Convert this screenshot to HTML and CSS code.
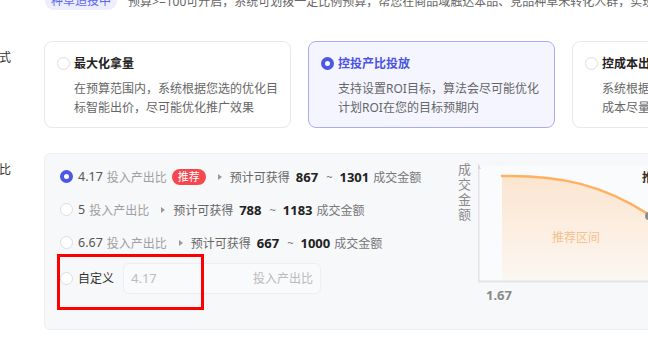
FILE: index.html
```html
<!DOCTYPE html>
<html lang="zh-CN">
<head>
  <meta charset="UTF-8" />
  <title>投放设置</title>
  <link rel="stylesheet" href="styles.css">
</head>
<body>
  <!-- Top notice -->
  <div class="notice">
    <span class="notice-tag">种草追投中</span>
    <span class="notice-text">预算&gt;=100可开启，系统可划拨一定比例预算，帮您在商品域触达本品、竞品种草未转化人群，实现种草转化</span>
  </div>

  <!-- Bid mode -->
  <div class="form-row">
    <div class="form-label"><span>出价方式</span></div>
    <div class="mode-cards">
      <div class="mode-card">
        <div class="mode-title"><span class="radio"></span>最大化拿量</div>
        <div class="mode-desc">在预算范围内，系统根据您选的优化目标智能出价，尽可能优化推广效果</div>
      </div>
      <div class="mode-card active">
        <div class="mode-title"><span class="radio checked"></span>控投产比投放</div>
        <div class="mode-desc">支持设置ROI目标，算法会尽可能优化计划ROI在您的目标预期内</div>
      </div>
      <div class="mode-card">
        <div class="mode-title"><span class="radio"></span>控成本出价</div>
        <div class="mode-desc">系统根据您设置的成本目标智能出价，成本尽量控制在目标范围内</div>
      </div>
    </div>
  </div>

  <!-- ROI target -->
  <div class="form-row roi-row">
    <div class="form-label"><span>投入产出比</span></div>
    <div class="roi-panel">
      <div class="roi-list">
        <div class="roi-option">
          <span class="radio checked"></span>
          <span class="roi-value">4.17</span>
          <span class="roi-unit">投入产出比</span>
          <span class="badge">推荐</span>
          <span class="arrow"></span>
          <span class="roi-est">预计可获得</span>
          <b class="num">867</b>
          <span class="tilde">~</span>
          <b class="num">1301</b>
          <span class="roi-gmv">成交金额</span>
        </div>
        <div class="roi-option">
          <span class="radio"></span>
          <span class="roi-value">5</span>
          <span class="roi-unit">投入产出比</span>
          <span class="arrow"></span>
          <span class="roi-est">预计可获得</span>
          <b class="num">788</b>
          <span class="tilde">~</span>
          <b class="num">1183</b>
          <span class="roi-gmv">成交金额</span>
        </div>
        <div class="roi-option">
          <span class="radio"></span>
          <span class="roi-value">6.67</span>
          <span class="roi-unit">投入产出比</span>
          <span class="arrow"></span>
          <span class="roi-est">预计可获得</span>
          <b class="num">667</b>
          <span class="tilde">~</span>
          <b class="num">1000</b>
          <span class="roi-gmv">成交金额</span>
        </div>
        <div class="roi-option custom">
          <span class="radio"></span>
          <span class="custom-label">自定义</span>
          <div class="roi-input">
            <span class="placeholder">4.17</span>
            <span class="suffix">投入产出比</span>
          </div>
        </div>
      </div>

      <!-- Estimate chart -->
      <div class="roi-chart">
        <div class="axis-title">成交金额</div>
        <svg width="180" height="160" viewBox="24 0 180 160">
          <defs>
            <linearGradient id="areaFill" x1="0" y1="0" x2="0" y2="1">
              <stop offset="0" stop-color="#fbe5d0" />
              <stop offset="1" stop-color="#fcf7f2" />
            </linearGradient>
          </defs>
          <rect x="24" y="6" width="180" height="115" fill="#fafbfc" />
          <path d="M48,16 C105,15 150,24 200,58 L200,121 L48,121 Z" fill="url(#areaFill)" />
          <path d="M48,16 C105,15 150,24 200,58" fill="none" stroke="#ffb061" stroke-width="2.5" stroke-linecap="round" />
          <line x1="24.5" y1="5" x2="24.5" y2="121" stroke="#e3e4e8" stroke-width="2" />
          <line x1="24" y1="121.5" x2="204" y2="121.5" stroke="#e3e4e8" stroke-width="2" />
          <polygon points="22,9 24.5,4 27,9" fill="#d6d7dc" />
          <text class="zone" x="122" y="82" text-anchor="middle">推荐区间</text>
          <text class="tick" x="32" y="140">1.67</text>
          <text class="point-label" x="188" y="22">推荐</text>
          <circle cx="195" cy="56" r="4" fill="#8c8c8c" />
        </svg>
      </div>

      <!-- Highlight box -->
      <div class="highlight"></div>
    </div>
  </div>
</body>
</html>
```

FILE: styles.css
```css
* {
  margin: 0;
  padding: 0;
  box-sizing: border-box;
}

html, body {
  overflow: hidden;
  background: #fff;
  font-family: "Noto Sans", "Noto Sans CJK SC", sans-serif;
  font-size: 12px;
  color: #333;
}

body {
  width: 648px;
  height: 358px;
}

.notice {
  display: flex;
  align-items: center;
  gap: 11px;
  height: 18px;
  margin-top: -8px;
  padding-left: 45px;
  white-space: nowrap;
}

.notice-tag {
  background: #eceefe;
  color: #5c68f2;
  border-radius: 9px;
  padding: 0 6px;
  line-height: 18px;
}

.notice-text {
  color: #666;
}

.form-row {
  display: flex;
  margin-top: 31px;
}

.roi-row {
  margin-top: 25px;
}

.form-label {
  display: flex;
  justify-content: flex-end;
  width: 11px;
  margin-right: 33px;
  flex: none;
  padding-top: 9px;
  white-space: nowrap;
  line-height: 16px;
  color: #333;
}

/* mode cards */

.mode-cards {
  display: flex;
  gap: 17px;
  flex: none;
}

.mode-card {
  width: 247px;
  height: 87px;
  border: 1px solid #e6e8ef;
  border-radius: 8px;
  padding: 13px 12px 0 12px;
  background: #fff;
}

.mode-card.active {
  background: #f4f5ff;
  border-color: #a7acf5;
}

.mode-title {
  display: flex;
  align-items: center;
  gap: 4px;
  font-weight: 700;
  font-size: 12px;
  line-height: 17px;
  color: #222;
}

.mode-card.active .mode-title {
  color: #4a53e2;
}

.mode-desc {
  margin-top: 7px;
  padding-left: 17px;
  line-height: 19px;
  color: #666;
}

.radio {
  display: inline-block;
  flex: none;
  width: 13px;
  height: 13px;
  border-radius: 50%;
  border: 1px solid #dcdee5;
  background: #fff;
}

.radio.checked {
  border: 4px solid #4b57e6;
}

/* roi panel */

.roi-panel {
  position: relative;
  display: flex;
  flex: none;
  width: 700px;
  height: 177px;
  background: #f7f8fa;
  border: 1px solid #eeeff3;
  border-radius: 6px;
  padding: 6px 0 0 15px;
}

.roi-list {
  width: 397px;
  flex: none;
}

.roi-option {
  display: flex;
  align-items: center;
  height: 33px;
  white-space: nowrap;
  color: #666;
}

.roi-option .radio {
  margin-right: 5px;
}

.roi-value {
  color: #555;
  font-size: 12.5px;
  margin-right: 4px;
}

.roi-unit {
  color: #a0a0a0;
}

.badge {
  margin-left: 5px;
  background: #f5474d;
  color: #fff;
  font-size: 11px;
  line-height: 16px;
  height: 16px;
  padding: 0 6px;
  border-radius: 8px;
}

.arrow {
  width: 0;
  height: 0;
  margin: 0 8px 0 12px;
  border-left: 4px solid #999;
  border-top: 3.5px solid transparent;
  border-bottom: 3.5px solid transparent;
}

.roi-est {
  color: #666;
}

.num {
  margin-left: 6px;
  color: #222;
  font-size: 13px;
  font-weight: 700;
}

.tilde {
  margin: 0 1px 0 8px;
  color: #777;
  font-size: 11px;
}

.roi-gmv {
  margin-left: 4px;
  color: #777;
}

.roi-option.custom {
  height: 38px;
}

.custom-label {
  color: #333;
  margin-right: 9px;
}

.roi-input {
  display: flex;
  justify-content: space-between;
  align-items: center;
  width: 198px;
  height: 31px;
  padding: 0 7px;
  background: #f9fafb;
  border: 1px solid #edeef2;
  border-radius: 6px;
  color: #bbb;
}

.placeholder {
  font-size: 13px;
}

/* chart */

.roi-chart {
  display: flex;
  flex: none;
}

.axis-title {
  writing-mode: vertical-rl;
  font-size: 13px;
  line-height: 13px;
  letter-spacing: 2px;
  color: #8a8a8a;
  width: 13px;
  margin: 3px 8px 0 0;
}

.roi-chart svg {
  flex: none;
}

.zone {
  font-size: 12px;
  fill: #f7c08d;
}

.tick {
  font-size: 13px;
  font-weight: 700;
  fill: #8a8a8a;
}

.point-label {
  font-size: 12px;
  font-weight: 700;
  fill: #333;
}

.highlight {
  position: absolute;
  left: 12px;
  top: 100px;
  width: 147px;
  height: 56px;
  border: 3px solid #ff0000;
}
```
